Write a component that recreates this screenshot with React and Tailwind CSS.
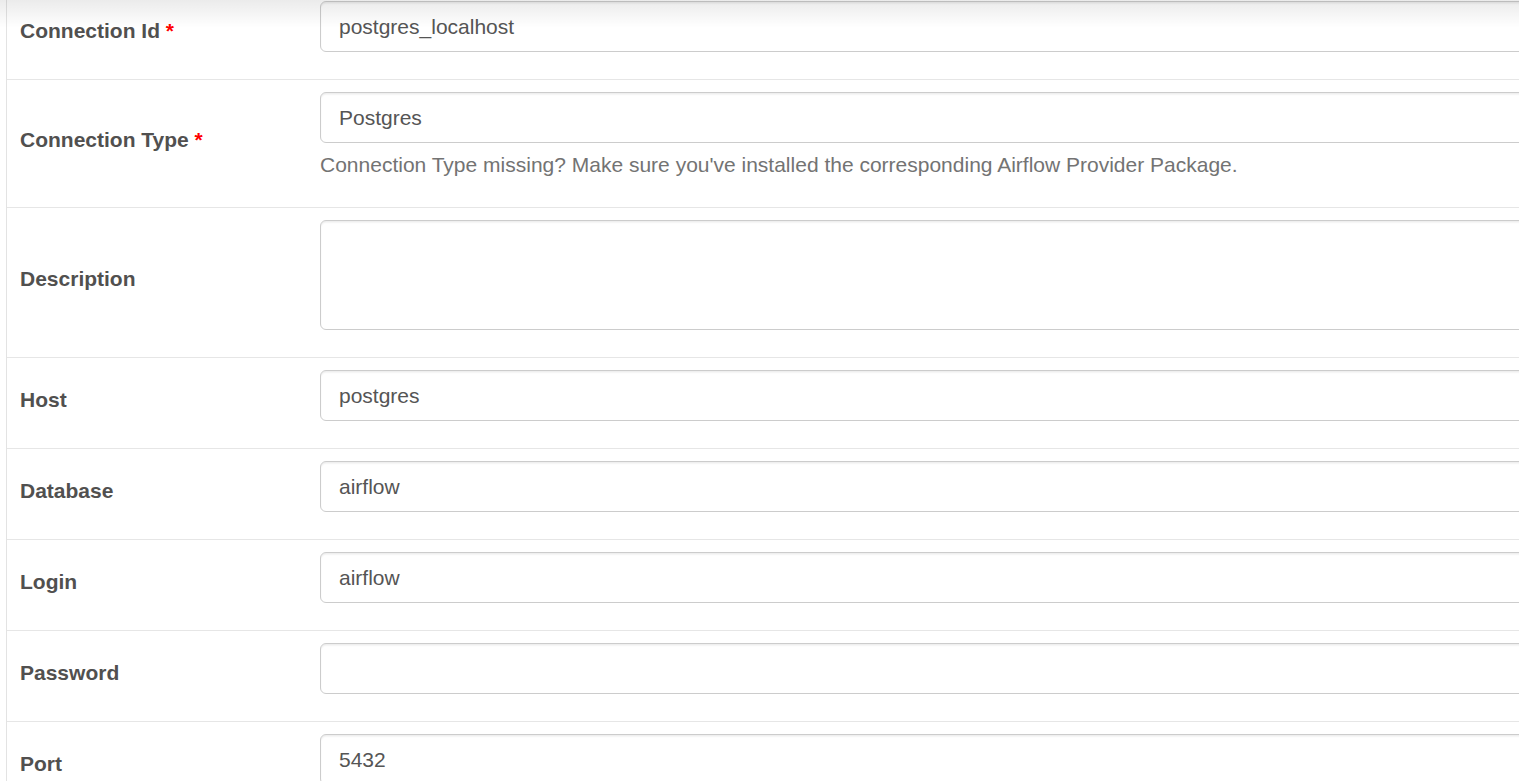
import React from "react";

const fields = [
    { label: "Connection Id", required: true, value: "postgres_localhost" },
    {
        label: "Connection Type",
        required: true,
        value: "Postgres",
        help: "Connection Type missing? Make sure you've installed the corresponding Airflow Provider Package.",
    },
    { label: "Description", textarea: true },
    { label: "Host", value: "postgres" },
    { label: "Database", value: "airflow" },
    { label: "Login", value: "airflow" },
    { label: "Password", value: "" },
    { label: "Port", value: "5432" },
];

const FieldRow = ({ field }) => {
    return (
        <div className="flex border-b border-[#e6e6e6]">
            <div className="w-[301px] shrink-0 flex items-center pl-[13px] pr-[12px] pb-[7px] text-[21px] font-bold leading-[30px] text-[#51504f]">
                <span>
                    {field.label}
                    {field.required && <span className="text-[#ff0000]"> *</span>}
                </span>
            </div>
            <div className="flex-1 pl-[12px] pr-[12px] pt-[12px] pb-[12px]">
                {field.textarea ? (
                    <div className="h-[110px] w-full rounded-[6px] border border-[#cccccc] bg-white shadow-[inset_0_1.5px_1.5px_rgba(0,0,0,0.075)]" />
                ) : (
                    <div className="h-[51px] w-full rounded-[6px] border border-[#cccccc] bg-white px-[18px] flex items-center text-[21px] text-[#555555] shadow-[inset_0_1.5px_1.5px_rgba(0,0,0,0.075)]">
                        {field.value}
                    </div>
                )}
                {field.help ? (
                    <div className="mt-[7px] mb-[15px] text-[21px] leading-[30px] text-[#737373]">
                        {field.help}
                    </div>
                ) : (
                    <div className="h-[15px]" />
                )}
            </div>
        </div>
    );
};

export default function App() {
    return (
        <div
            className="relative h-[781px] w-full overflow-hidden bg-white"
            style={{ fontFamily: '"Liberation Sans", Arial, sans-serif' }}
        >
            <div className="ml-[6px] -mt-[11px] w-[1580px] border-l border-[#e3e3e3]">
                {fields.map((field) => (
                    <FieldRow key={field.label} field={field} />
                ))}
            </div>
            <div className="pointer-events-none absolute inset-x-0 top-0 h-[28px] bg-gradient-to-b from-[rgba(0,0,0,0.08)] to-transparent" />
        </div>
    );
}
